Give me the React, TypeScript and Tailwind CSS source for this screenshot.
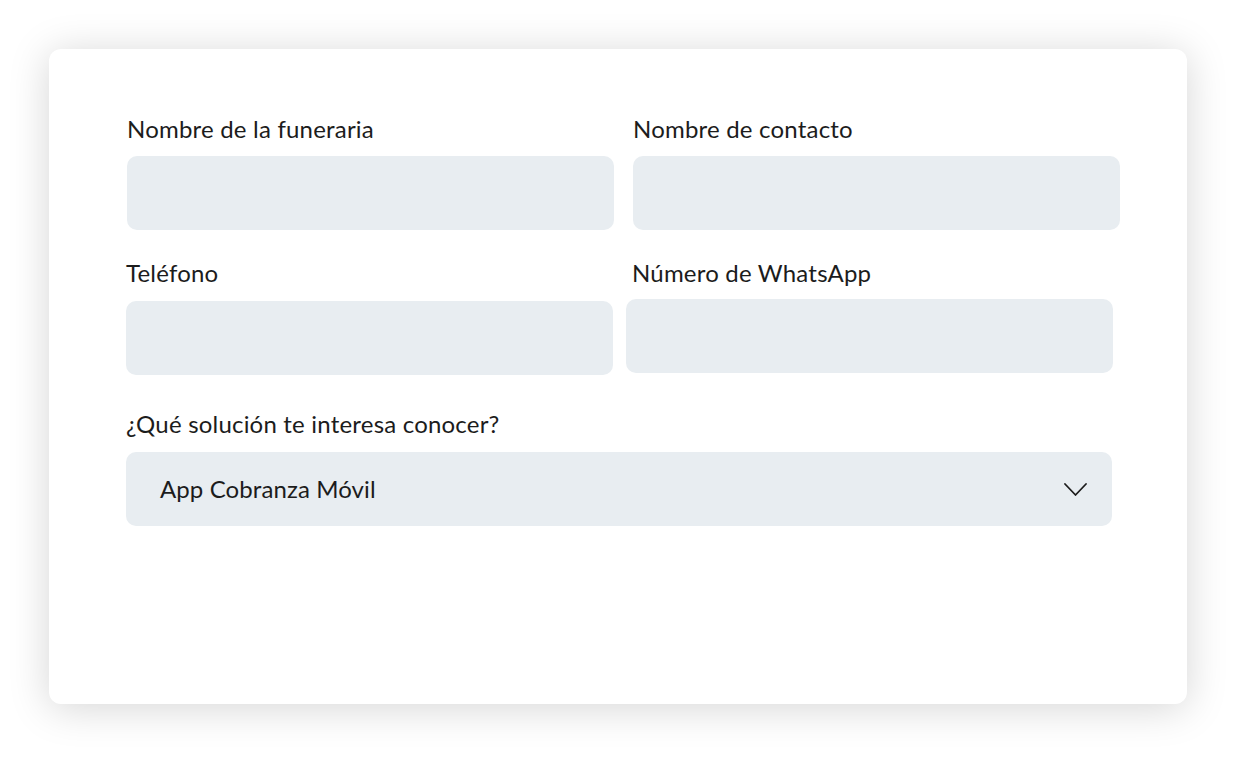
const inputClass = 'block h-[74px] w-[487px] rounded-[10px] bg-[#e8edf1] px-4 text-[22px] outline-none'
const labelClass = 'block h-[28px] text-[24px] leading-[27px] tracking-[0.2px] text-[#1c1c1c]'

export default function App() {
  return (
    <div className="min-h-screen bg-white pt-[49px] pl-[49px]" style={{ fontFamily: 'Lato, "Noto Sans", sans-serif' }}>
      <div className="h-[655px] w-[1138px] rounded-[12px] bg-white pt-[66px] pl-[77px] shadow-[0_4px_40px_rgba(0,0,0,0.17)]">
        <div className="flex">
          <div className="ml-[1px] w-[487px]">
            <label className={labelClass}>Nombre de la funeraria</label>
            <input className={`${inputClass} mt-[13px]`} />
          </div>
          <div className="ml-[19px] w-[487px]">
            <label className={labelClass}>Nombre de contacto</label>
            <input className={`${inputClass} mt-[13px]`} />
          </div>
        </div>

        <div className="mt-[29px] flex">
          <div className="w-[487px]">
            <label className={labelClass}>Teléfono</label>
            <input className={`${inputClass} mt-[14px]`} />
          </div>
          <div className="ml-[13px] w-[487px]">
            <label className={`${labelClass} pl-[6px]`}>Número de WhatsApp</label>
            <input className={`${inputClass} mt-[12px]`} />
          </div>
        </div>

        <div className="mt-[35px] w-[986px]">
          <label className={labelClass}>¿Qué solución te interesa conocer?</label>
          <div className="mt-[14px] flex h-[74px] items-center justify-between rounded-[10px] bg-[#e8edf1] pl-[34px] pr-[25px]">
            <span className="text-[24px] tracking-[0.1px] text-[#1c1c1c]">App Cobranza Móvil</span>
            <svg width="23" height="14" viewBox="0 0 23 14" fill="none" className="mt-[2px]">
              <polyline points="1,1 11.5,12 22,1" stroke="#1c1c1c" strokeWidth="1.8" strokeLinecap="round" strokeLinejoin="round" />
            </svg>
          </div>
        </div>
      </div>
    </div>
  )
}
